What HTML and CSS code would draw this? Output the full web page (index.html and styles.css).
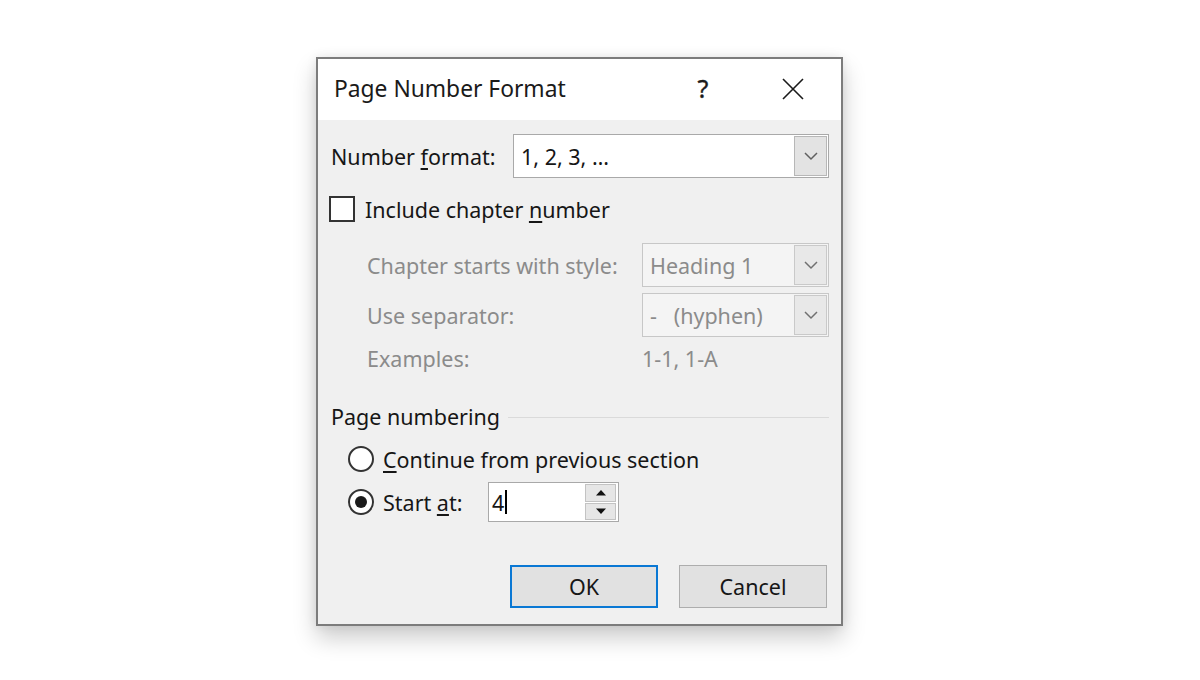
FILE: index.html
```html
<!DOCTYPE html>
<html>
<head>
<meta charset="utf-8">
<link rel="stylesheet" href="styles.css">
</head>
<body>
<div class="stage">
  <div class="dialog">
    <div class="titlebar">
      <span class="title">Page Number Format</span>
      <span class="help">?</span>
      <span class="close">
        <svg width="24" height="24" viewBox="0 0 24 24"><path d="M2 2 L22 22 M22 2 L2 22" stroke="#1a1a1a" stroke-width="1.6" fill="none"/></svg>
      </span>
    </div>
    <div class="body">
      <div class="row-format">
        <span class="label">Number <u>f</u>ormat:</span>
        <div class="select wide">
          <span class="value">1, 2, 3, …</span>
          <span class="drop"><svg width="16" height="10" viewBox="0 0 16 10"><path d="M2 2 L8 8 L14 2" stroke="#606060" stroke-width="1.5" fill="none"/></svg></span>
        </div>
      </div>
      <div class="row-check">
        <span class="checkbox"></span>
        <span class="label">Include chapter <u>n</u>umber</span>
      </div>
      <div class="chapter-grid">
        <span class="label disabled">Chapter starts with style:</span>
        <div class="select narrow off">
          <span class="value">Heading 1</span>
          <span class="drop"><svg width="16" height="10" viewBox="0 0 16 10"><path d="M2 2 L8 8 L14 2" stroke="#707070" stroke-width="1.5" fill="none"/></svg></span>
        </div>
        <span class="label disabled">Use separator:</span>
        <div class="select narrow off">
          <span class="value">-&nbsp;&nbsp;&nbsp;(hyphen)</span>
          <span class="drop"><svg width="16" height="10" viewBox="0 0 16 10"><path d="M2 2 L8 8 L14 2" stroke="#707070" stroke-width="1.5" fill="none"/></svg></span>
        </div>
        <span class="label disabled ex">Examples:</span>
        <span class="label disabled ex">1-1, 1-A</span>
      </div>
      <div class="group-head">
        <span class="label">Page numbering</span>
        <span class="rule"></span>
      </div>
      <div class="row-radio first">
        <span class="radio"></span>
        <span class="label"><u>C</u>ontinue from previous section</span>
      </div>
      <div class="row-radio second">
        <span class="radio on"><span class="dot"></span></span>
        <span class="label start">Start <u>a</u>t:</span>
        <div class="spinner">
          <span class="spin-value">4<span class="caret"></span></span>
          <span class="spin-btns">
            <span class="spin-btn"><svg width="12" height="7" viewBox="0 0 12 7"><path d="M1 6.5 L6 1 L11 6.5 Z" fill="#111"/></svg></span>
            <span class="spin-btn"><svg width="12" height="7" viewBox="0 0 12 7"><path d="M1 0.5 L6 6 L11 0.5 Z" fill="#111"/></svg></span>
          </span>
        </div>
      </div>
      <div class="buttons">
        <span class="btn default">OK</span>
        <span class="btn">Cancel</span>
      </div>
    </div>
  </div>
</div>
</body>
</html>
```

FILE: styles.css
```css
html, body {
  margin: 0;
  padding: 0;
  background: #ffffff;
}
body {
  font-family: "Noto Sans", "Open Sans", "DejaVu Sans", sans-serif;
  color: #161616;
  min-height: 680px;
}
.stage {
  padding: 57px 0 0 316px;
}
.dialog {
  width: 527px;
  height: 569px;
  box-sizing: border-box;
  border: 2px solid #7c7c7c;
  background: #f0f0f0;
  box-shadow: 0 12px 22px rgba(0,0,0,0.2), 0 0 10px rgba(0,0,0,0.08);
  display: flex;
  flex-direction: column;
}
.titlebar {
  height: 61px;
  background: #ffffff;
  display: flex;
  align-items: center;
  padding-left: 16px;
  flex-shrink: 0;
}
.title {
  font-size: 22.8px;
  flex: 1;
  color: #1a1a1a;
  margin-top: -2px;
}
.help {
  font-size: 25px;
  width: 24px;
  text-align: center;
  margin-right: 66px;
  color: #1a1a1a;
  margin-top: -3px;
  -webkit-text-stroke: 0.4px #1a1a1a;
}
.close {
  width: 24px;
  height: 24px;
  margin-right: 36px;
  display: flex;
  margin-top: -2px;
}
.body {
  flex: 1;
  padding: 0 12px 0 13px;
  display: flex;
  flex-direction: column;
  font-size: 21.5px;
}
.label {
  white-space: nowrap;
}
.label u {
  text-decoration-thickness: 1.5px;
  text-underline-offset: 3px;
}
.disabled {
  color: #8b8b8b;
}
.row-format {
  margin-top: 14px;
  height: 44px;
  display: flex;
  align-items: center;
}
.row-format .label {
  width: 182px;
}
.select {
  box-sizing: border-box;
  height: 44px;
  border: 1px solid #a9a9a9;
  background: #ffffff;
  display: flex;
  align-items: stretch;
}
.select.wide {
  width: 316px;
}
.select.narrow {
  width: 187px;
}
.select .value {
  flex: 1;
  display: flex;
  align-items: center;
  padding-left: 7px;
  white-space: nowrap;
}
.select .drop {
  width: 31px;
  border: 1px solid #b7b7b7;
  margin: 1px;
  background: #e3e3e3;
  display: flex;
  align-items: center;
  justify-content: center;
}
.select.off {
  background: #f4f4f4;
  border-color: #c7c7c7;
  color: #8b8b8b;
}
.select.off .drop {
  background: #e8e8e8;
  border-color: #c9c9c9;
}
.row-check {
  margin-top: 18px;
  height: 26px;
  display: flex;
  align-items: center;
}
.checkbox {
  box-sizing: border-box;
  width: 26px;
  height: 26px;
  border: 2px solid #333333;
  background: #ffffff;
  margin-left: -2px;
  margin-right: 10px;
}
.chapter-grid {
  margin-top: 21px;
  margin-left: 36px;
  display: grid;
  grid-template-columns: 275px 187px;
  grid-template-rows: 44px 44px 30px;
  row-gap: 6px;
  align-items: center;
}
.group-head {
  margin-top: 28px;
  height: 30px;
  display: flex;
  align-items: center;
}
.group-head .rule {
  flex: 1;
  height: 1px;
  background: #dadada;
  margin-left: 8px;
  margin-top: 2px;
}
.row-radio {
  display: flex;
  align-items: center;
  padding-left: 17px;
}
.row-radio.first {
  margin-top: 13px;
  height: 30px;
}
.row-radio.second {
  margin-top: 8px;
  height: 40px;
}
.radio {
  box-sizing: border-box;
  width: 26px;
  height: 26px;
  border: 2px solid #333333;
  border-radius: 50%;
  background: #ffffff;
  margin-right: 9px;
  display: flex;
  align-items: center;
  justify-content: center;
}
.radio .dot {
  width: 12px;
  height: 12px;
  border-radius: 50%;
  background: #1a1a1a;
}
.label.start {
  width: 105px;
}
.spinner {
  box-sizing: border-box;
  width: 131px;
  height: 40px;
  border: 1px solid #a9a9a9;
  background: #ffffff;
  display: flex;
}
.spin-value {
  flex: 1;
  display: flex;
  align-items: center;
  padding-left: 3px;
}
.caret {
  display: inline-block;
  width: 1.5px;
  height: 24px;
  background: #000;
  margin-left: 1px;
}
.spin-btns {
  width: 31px;
  margin: 1px 2px 1px 0;
  display: flex;
  flex-direction: column;
  gap: 1px;
}
.spin-btn {
  flex: 1;
  box-sizing: border-box;
  border: 1px solid #c3c3c3;
  background: #e6e6e6;
  display: flex;
  align-items: center;
  justify-content: center;
}
.buttons {
  margin-top: auto;
  margin-bottom: 16px;
  display: flex;
  justify-content: flex-end;
  gap: 21px;
  padding-right: 2px;
}
.btn {
  box-sizing: border-box;
  width: 148px;
  height: 43px;
  border: 1px solid #adadad;
  background: #e1e1e1;
  display: flex;
  align-items: center;
  justify-content: center;
}
.btn.default {
  border: 2px solid #0a78d4;
}
```
